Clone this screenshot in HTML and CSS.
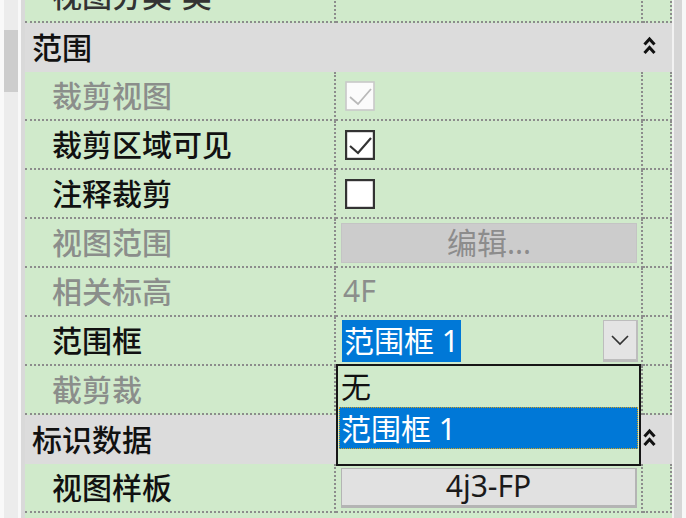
FILE: index.html
```html
<!DOCTYPE html>
<html lang="zh-CN">
<head>
<meta charset="utf-8">
<title>属性</title>
<link rel="stylesheet" href="styles.css">
</head>
<body>
<div class="window">
  <div class="lside">
    <div class="track"><div class="thumb"></div></div>
    <div class="gap"></div>
    <div class="edge"></div>
  </div>
  <div class="props">
    <div class="list">
      <div class="row partial">
        <div class="name">视图分类-类</div><div class="val"></div><div class="ext"></div>
      </div>
      <div class="group">
        <span class="gname">范围</span>
        <svg class="collapse" viewBox="0 0 13 22"><polyline points="1.5,10.5 6.5,5 11.5,10.5"/><polyline points="1.5,19 6.5,13.5 11.5,19"/></svg>
      </div>
      <div class="row">
        <div class="name dis">裁剪视图</div>
        <div class="val"><svg class="cb dis" viewBox="0 0 30 30"><rect x="1" y="1" width="28" height="28"/><polyline points="5,16 13,23 26,8"/></svg></div>
        <div class="ext"></div>
      </div>
      <div class="row">
        <div class="name">裁剪区域可见</div>
        <div class="val"><svg class="cb" viewBox="0 0 30 30"><rect x="1" y="1" width="28" height="28"/><polyline points="5,16 13,23 26,8"/></svg></div>
        <div class="ext"></div>
      </div>
      <div class="row">
        <div class="name">注释裁剪</div>
        <div class="val"><svg class="cb" viewBox="0 0 30 30"><rect x="1" y="1" width="28" height="28"/></svg></div>
        <div class="ext"></div>
      </div>
      <div class="row">
        <div class="name dis">视图范围</div>
        <div class="val"><div class="btn btn-dis">编辑...</div></div>
        <div class="ext"></div>
      </div>
      <div class="row">
        <div class="name dis">相关标高</div>
        <div class="val"><span class="txt dis">4F</span></div>
        <div class="ext"></div>
      </div>
      <div class="row">
        <div class="name">范围框</div>
        <div class="val combo">
          <span class="sel">范围框 1</span>
          <div class="drop"><svg viewBox="0 0 32 38"><polyline points="8,15 16,23 24,15"/></svg></div>
        </div>
        <div class="ext"></div>
      </div>
      <div class="row">
        <div class="name dis">截剪裁</div>
        <div class="val"></div>
        <div class="ext"></div>
      </div>
      <div class="group">
        <span class="gname">标识数据</span>
        <svg class="collapse" viewBox="0 0 13 22"><polyline points="1.5,10.5 6.5,5 11.5,10.5"/><polyline points="1.5,19 6.5,13.5 11.5,19"/></svg>
      </div>
      <div class="row">
        <div class="name">视图样板</div>
        <div class="val"><div class="btn">4j3-FP</div></div>
        <div class="ext"></div>
      </div>
    </div>
    <div class="dropdown">
      <div class="opt">无</div>
      <div class="opt cur">范围框 1</div>
    </div>
  </div>
  <div class="rside">
    <div class="rgap"></div>
    <div class="rbar"></div>
  </div>
</div>
</body>
</html>
```
FILE: styles.css
```css
* { box-sizing: border-box; }
html, body {
  margin: 0;
  padding: 0;
  background: #f7f7f7;
}
body {
  font-family: "Noto Sans", "Noto Sans CJK SC", sans-serif;
  font-size: 30px;
  font-weight: 500;
  color: #111;
}
.window {
  display: flex;
  width: 686px;
  height: 518px;
  overflow: hidden;
}
.lside {
  display: flex;
  width: 25px;
  flex: none;
  padding-left: 4px;
  background: #f9f9f9;
}
.track {
  width: 14px;
  background: #ececec;
  padding-top: 30px;
}
.thumb {
  height: 62px;
  background: #cdcdcd;
}
.gap { width: 3px; background: #f8f8f8; }
.edge { width: 4px; background: #d9d9d9; }

.props {
  position: relative;
  width: 647px;
  flex: none;
  background: #d0eacb;
}
.list {
  margin-top: -26px;
}
.row {
  display: flex;
  height: 49px;
}
.name, .val, .ext {
  display: flex;
  align-items: center;
  border-bottom: 2px dotted #8c8c8c;
  border-right: 2px dotted #8c8c8c;
}
.name {
  width: 311px;
  padding-left: 27px;
  padding-bottom: 4px;
  white-space: nowrap;
}
.partial .name {
  padding-bottom: 8px;
  color: #333;
}
.val {
  width: 307px;
  padding-left: 9px;
}
.ext { width: 29px; }
.dis { color: #8b8e8b; }

.group {
  display: flex;
  align-items: center;
  height: 49px;
  background: #dcdcdc;
  padding-left: 7px;
  padding-bottom: 3px;
}
.gname { width: 611px; }
.collapse {
  width: 13px;
  height: 22px;
  margin-left: 0;
  margin-top: -2px;
  fill: none;
  stroke: #111;
  stroke-width: 3;
}

.cb { width: 30px; height: 30px; }
.cb rect { fill: #fff; stroke: #333; stroke-width: 2.4; }
.cb polyline { fill: none; stroke: #333; stroke-width: 2.2; }
.cb.dis rect { fill: #fbfbfb; stroke: #c9c9c9; stroke-width: 1.6; }
.cb.dis polyline { stroke: #b9b9b9; stroke-width: 1.8; }

.btn {
  display: flex;
  align-items: center;
  justify-content: center;
  width: 296px;
  height: 40px;
  margin-left: -4px;
  padding-bottom: 3px;
  background: #e1e1e1;
  border: 1px solid #b4b4b4;
  border-bottom-width: 3px;
  border-right-width: 2px;
  color: #1a1a1a;
  font-weight: 400;
}
.btn-dis {
  background: #cccccc;
  border-color: #c4c4c4;
  border-width: 1px;
  color: #8c8c8c;
}
.txt { margin-left: -2px; font-weight: 400; padding-bottom: 3px; }

.combo { justify-content: space-between; padding-left: 6px; padding-right: 3px; }
.sel {
  display: flex;
  align-items: center;
  height: 42px;
  padding: 0 2px 3px;
  background: #0078d7;
  color: #fff;
  font-weight: 400;
}
.drop {
  width: 35px;
  height: 42px;
  background: #e4e4e4;
  border: 1px solid #bdbdbd;
  border-bottom-width: 3px;
  border-right-width: 2px;
}
.drop svg {
  display: block;
  width: 32px;
  height: 38px;
  fill: none;
  stroke: #333;
  stroke-width: 1.7;
}

.dropdown {
  position: absolute;
  left: 311px;
  top: 364px;
  width: 305px;
  height: 102px;
  border: 2px solid #161616;
  background: #d0eacb;
  font-weight: 400;
}
.opt {
  display: flex;
  align-items: center;
  height: 41px;
  padding-left: 3px;
  padding-bottom: 3px;
}
.opt.cur {
  height: 42px;
  margin: 0 1px;
  padding-left: 1px;
  background: #0078d7;
  color: #fff;
  border: 1px dotted #d9a21b;
}

.rside {
  display: flex;
  flex: none;
  width: 14px;
}
.rgap { width: 2px; background: #f2f2f2; }
.rbar { width: 8px; background: #d6d6d6; }
```
